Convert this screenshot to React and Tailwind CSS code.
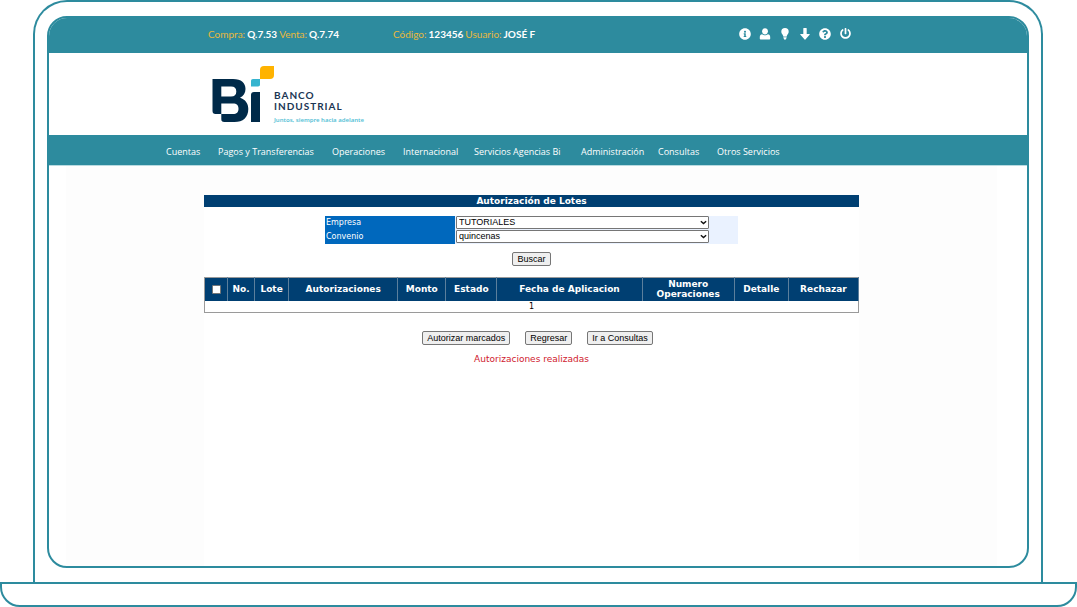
import React, { useState } from 'react';
import { FaInfoCircle, FaQuestionCircle, FaPowerOff } from 'react-icons/fa';

const MENU = [
    'Cuentas',
    'Pagos y Transferencias',
    'Operaciones',
    'Internacional',
    'Servicios Agencias Bi',
    'Administración',
    'Consultas',
    'Otros Servicios',
];

const COLUMNS = [
    { label: 'No.', width: 'w-[27px]' },
    { label: 'Lote', width: 'w-[34px]' },
    { label: 'Autorizaciones', width: 'w-[109px]' },
    { label: 'Monto', width: 'w-[48px]' },
    { label: 'Estado', width: 'w-[51px]' },
    { label: 'Fecha de Aplicacion', width: 'w-[145px]' },
    { label: 'Numero Operaciones', width: 'w-[92px]' },
    { label: 'Detalle', width: 'w-[54px]' },
    { label: 'Rechazar', width: 'w-[70px]' },
];

function UserIcon() {
    return (
        <svg viewBox="0 0 12 12" className="w-3 h-3" fill="currentColor">
            <path d="M6 .3C4.200.3 3.100 1.500 3.100 3.200c0 1.700 1 3.300 2.900 3.300s2.900-1.600 2.900-3.300C8.900 1.500 7.800.3 6 .3z" />
            <path d="M3.200 6.200C4 7 4.900 7.300 6 7.300S8 7 8.800 6.200c1.500.2 2.400 1.100 2.400 2.800v1.700c0 .5-.3.8-.8.8H1.600c-.5 0-.8-.3-.8-.8V9c0-1.700.9-2.600 2.400-2.800z" />
        </svg>
    );
}

function BulbIcon() {
    return (
        <svg viewBox="0 0 12 12" className="w-3 h-3" fill="currentColor">
            <path d="M6 0a3.700 3.700 0 0 0-3.700 3.700c0 1.200.6 2 1.200 2.900.4.6.7 1.200.8 1.900h3.400c.1-.7.4-1.300.8-1.900.6-.9 1.200-1.700 1.200-2.900A3.700 3.700 0 0 0 6 0z" />
            <path d="M4.400 8.800h3.200v.9H4.400zM4.600 10.100h2.800c0 .8-.6 1.700-1.400 1.700s-1.400-.9-1.400-1.700z" />
        </svg>
    );
}

function DownIcon() {
    return (
        <svg viewBox="0 0 12 12" className="w-3 h-3" fill="currentColor">
            <path d="M4.300.5c0-.2.2-.4.400-.4h2.600c.2 0 .4.200.4.400V6h2.600c.4 0 .6.400.3.700l-4.200 4.800c-.2.300-.6.300-.8 0L1.400 6.700c-.3-.3-.1-.7.300-.7h2.600z" />
        </svg>
    );
}

const TOOLS = [
    { label: 'Información', icon: <FaInfoCircle className="w-3 h-3" /> },
    { label: 'Perfil', icon: <UserIcon /> },
    { label: 'Sugerencias', icon: <BulbIcon /> },
    { label: 'Descargas', icon: <DownIcon /> },
    { label: 'Ayuda', icon: <FaQuestionCircle className="w-3 h-3" /> },
    { label: 'Salir', icon: <FaPowerOff className="w-[11px] h-[11px]" /> },
];

function Logo() {
    return (
        <a href="#inicio" className="flex w-fit" aria-label="Banco Industrial">
            <svg viewBox="0 0 62 57" className="w-[62px] h-[57px]">
                <path
                    fill="#002a49"
                    fillRule="evenodd"
                    d="M.5 13H21c8.500 0 12.500 4 12.500 10 0 4-2 7-5.500 8.800 5.300 1.700 8.300 5.700 8.300 11.200C36.300 51.500 31 56 22.500 56H12.300c-2.200 0-3-.8-3-3v-5H3.500c-2 0-3-1-3-3zM9.300 20.500V30.500h9.700c3.600 0 5.300-1.800 5.300-5s-1.700-5-5.300-5zM9.300 37.500V48H21c3.700 0 5.500-2 5.500-5.300s-1.800-5.200-5.500-5.200z"
                />
                <path fill="#002a49" d="M39 29c0-2 1-3 3-3h6v30h-9z" />
                <path fill="#35b4cf" d="M39 15c0-1.300.7-2 2-2h7v5.500c0 1.300-.7 2-2 2h-7z" />
                <path fill="#ffb300" d="M48 4c0-2.700 1.300-4 4-4h10v9c0 2.700-1.300 4-4 4H48z" />
            </svg>
            <span className="flex flex-col pt-[24px] font-['Lato',sans-serif]">
                <span className="text-[10px] leading-[11px] font-bold tracking-widest text-[#1b3654]">BANCO</span>
                <span className="text-[10px] leading-[11px] font-bold tracking-widest text-[#1b3654]">INDUSTRIAL</span>
                <span className="pt-1 font-['Noto_Sans',sans-serif] text-[6px] leading-[8px] font-semibold text-[#55bfd6]">
                    Juntos, siempre hacia adelante
                </span>
            </span>
        </a>
    );
}

function TopBar() {
    return (
        <div className="bg-[#2d8b9e] pl-[17px] pr-[30px] font-['Lato',sans-serif] text-[10px] leading-[12px]">
            <div className="mx-auto flex max-w-[655px] h-[35px] items-center pb-1 pl-1 pr-2">
                <p className="flex w-[185px] gap-[2px] text-[#e8b83c]">
                    Compra: <b className="text-white">Q.7.53</b>
                    Venta: <b className="text-white">Q.7.74</b>
                </p>
                <p className="flex gap-[2px] text-[#e8b83c]">
                    Código: <b className="text-white">123456</b>
                    Usuario: <b className="text-white">JOSÉ F</b>
                </p>
                <div className="ml-auto flex gap-2 text-white">
                    {TOOLS.map((tool) => (
                        <button key={tool.label} type="button" aria-label={tool.label} className="flex w-3 h-3 items-center justify-center">
                            {tool.icon}
                        </button>
                    ))}
                </div>
            </div>
        </div>
    );
}

function MainMenu() {
    return (
        <nav className="bg-[#2d8b9e] border-b border-[#b9dbe1] pl-[17px] pr-[30px]">
            <ul className="mx-auto grid max-w-[731px] h-[30px] grid-cols-[52fr_114fr_71fr_71fr_107fr_77fr_59fr_180fr] items-center whitespace-nowrap pt-[3px] font-['Open_Sans',sans-serif] text-[9px] leading-[12px] text-white">
                {MENU.map((item) => (
                    <li key={item}>
                        <a href="#menu">{item}</a>
                    </li>
                ))}
            </ul>
        </nav>
    );
}

function FilterRow({ id, label, options }) {
    return (
        <div className="flex h-[14px] bg-[#eaf2ff]">
            <label htmlFor={id} className="w-[130px] bg-[#0068bd] pl-px text-[8px] leading-[14px] text-white">
                {label}
            </label>
            <div className="relative ml-px w-[253px]">
                <select
                    id={id}
                    className="block w-full h-[13px] appearance-none rounded-[1px] border border-[#767676] bg-white pl-[2px] font-['Liberation_Sans',sans-serif] text-[9px] leading-[11px] text-black"
                >
                    {options.map((option) => (
                        <option key={option}>{option}</option>
                    ))}
                </select>
                <svg viewBox="0 0 8 5" className="pointer-events-none absolute top-1 right-[2px] w-[7px] h-[5px]" fill="none" stroke="#111" strokeWidth="1.700">
                    <path d="M1 1l3 2.600L7 1" />
                </svg>
            </div>
        </div>
    );
}

function ActionButton({ children }) {
    return (
        <button
            type="button"
            className="h-[14px] rounded-[2px] border border-[#767676] bg-[#efefef] px-1 font-['Liberation_Sans',sans-serif] text-[9px] leading-[12px] text-black"
        >
            {children}
        </button>
    );
}

function LotesTable() {
    const [checked, setChecked] = useState(false);

    return (
        <table className="mt-[11px] w-full table-fixed border-collapse border border-[#9a9a9a] text-[9px]">
            <thead>
                <tr className="h-[23px] bg-[#003f72] leading-[10px] text-white">
                    <th className="w-[23px] border-r border-[#5c7f9c]">
                        <input
                            type="checkbox"
                            aria-label="Marcar todos"
                            checked={checked}
                            onChange={() => setChecked(!checked)}
                            className="mx-auto block w-[9px] h-[9px] appearance-none rounded-[1px] border border-[#767676] bg-white checked:bg-[#0068bd]"
                        />
                    </th>
                    {COLUMNS.map((column) => (
                        <th key={column.label} className={`${column.width} border-r border-[#5c7f9c] p-0`}>
                            {column.label}
                        </th>
                    ))}
                </tr>
            </thead>
            <tbody>
                <tr className="h-[12px] bg-white leading-[10px]">
                    <td colSpan={10} className="p-0 pt-px text-center text-[8px]">1</td>
                </tr>
            </tbody>
        </table>
    );
}

export default function App() {
    return (
        <div className="flex min-h-screen flex-col bg-white">
            {/* Laptop lid */}
            <div className="ml-[33px] mr-[34px] flex flex-1 flex-col rounded-t-[34px] border-2 border-b-0 border-[#2d8b9e] px-3 pt-[14px] pb-[14px]">
                <div className="flex flex-1 flex-col overflow-hidden rounded-[20px] border-2 border-[#2d8b9e]">
                    <TopBar />
                    <header className="pl-[17px] pr-[30px] pt-[13px] h-[82px]">
                        <div className="mx-auto max-w-[655px] pl-2">
                            <Logo />
                        </div>
                    </header>
                    <MainMenu />
                    <main className="ml-[17px] mr-[30px] flex flex-1 flex-col bg-[#fdfdfd] pt-[29px] font-['DejaVu_Sans',sans-serif]">
                        <div className="mx-auto w-full max-w-[655px] flex-1 bg-white">
                            <h1 className="bg-[#003f72] pt-px text-center text-[9px] leading-[11px] font-bold text-white">
                                Autorización de Lotes
                            </h1>
                            <form className="mx-auto mt-[9px] max-w-[413px]">
                                <FilterRow id="empresa" label="Empresa" options={['TUTORIALES']} />
                                <FilterRow id="convenio" label="Convenio" options={['quincenas']} />
                                <div className="mt-2 flex justify-center">
                                    <ActionButton>Buscar</ActionButton>
                                </div>
                            </form>
                            <LotesTable />
                            <div className="mt-[18px] flex justify-center gap-[15px] pl-3">
                                <ActionButton>Autorizar marcados</ActionButton>
                                <ActionButton>Regresar</ActionButton>
                                <ActionButton>Ir a Consultas</ActionButton>
                            </div>
                            <p className="mt-2 text-center text-[9px] leading-[12px] text-[#d0202e]">
                                Autorizaciones realizadas
                            </p>
                        </div>
                    </main>
                </div>
            </div>
            {/* Laptop base */}
            <div className="h-[25px] rounded-b-[20px] border-2 border-[#2d8b9e]" />
        </div>
    );
}
